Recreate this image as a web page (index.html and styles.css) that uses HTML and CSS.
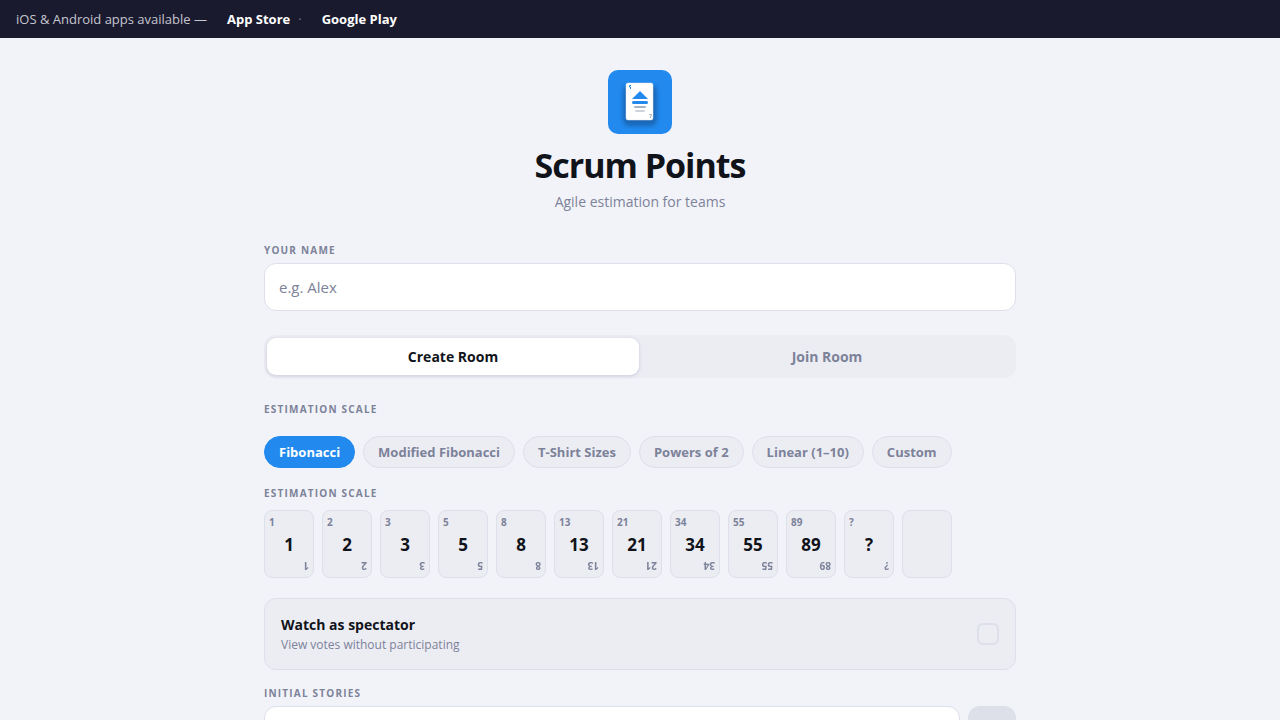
FILE: index.html
```html
<!DOCTYPE html>
<html lang="en">

<head>
    <meta charset="UTF-8">
    <meta name="viewport" content="width=device-width, initial-scale=1.0">
    <title>Scrum Points</title>
    <link rel="stylesheet" href="styles.css">
</head>

<body>
    <div class="app_banner">
        <span class="banner_text">iOS &amp; Android apps available —</span>
        <a href="#appstore">App Store</a>
        <span class="banner_dot">·</span>
        <a href="#googleplay">Google Play</a>
    </div>

    <main class="container">
        <header class="hero">
            <svg class="logo" viewBox="0 0 64 64" width="64" height="64" aria-hidden="true">
                <defs>
                    <filter id="card_shadow" x="-50%" y="-50%" width="200%" height="200%">
                        <feGaussianBlur stdDeviation="2" />
                    </filter>
                </defs>
                <rect width="64" height="64" rx="10" fill="#228aef" />
                <rect x="15" y="15" width="34" height="41" rx="6" fill="#12599f" opacity="0.7" filter="url(#card_shadow)" />
                <rect x="18" y="13" width="27" height="37" rx="2" fill="#fff" stroke="#e3e6ee" stroke-width="0.5" />
                <path d="M32 21 L40 29 H24 Z" fill="#228aef" />
                <rect x="24" y="31" width="16" height="3" rx="1.5" fill="#228aef" />
                <rect x="26" y="36" width="12" height="2" rx="1" fill="#a9b4c6" />
                <rect x="27" y="40" width="10" height="2" rx="1" fill="#cdd3dd" />
                <path d="M23 15.5 H21.5 V17 H22.5 V19" fill="none" stroke="#228aef" />
                <path d="M41 44.5 H43.5 V46 H42.5 V48" fill="none" stroke="#b3b9c7" />
            </svg>
            <h1>Scrum Points</h1>
            <p>Agile estimation for teams</p>
        </header>

        <label class="label" for="name">Your Name</label>
        <input class="text_input" type="text" id="name" placeholder="e.g. Alex">

        <div class="tabs">
            <button class="tab active" type="button">Create Room</button>
            <button class="tab" type="button">Join Room</button>
        </div>

        <h2 class="label">Estimation Scale</h2>
        <div class="scales">
            <button class="scale active" type="button">Fibonacci</button>
            <button class="scale" type="button">Modified Fibonacci</button>
            <button class="scale" type="button">T-Shirt Sizes</button>
            <button class="scale" type="button">Powers of 2</button>
            <button class="scale" type="button">Linear (1–10)</button>
            <button class="scale" type="button">Custom</button>
        </div>

        <h2 class="label">Estimation Scale</h2>
        <div class="cards">
            <div class="card"><small>1</small><b>1</b><small class="flipped">1</small></div>
            <div class="card"><small>2</small><b>2</b><small class="flipped">2</small></div>
            <div class="card"><small>3</small><b>3</b><small class="flipped">3</small></div>
            <div class="card"><small>5</small><b>5</b><small class="flipped">5</small></div>
            <div class="card"><small>8</small><b>8</b><small class="flipped">8</small></div>
            <div class="card"><small>13</small><b>13</b><small class="flipped">13</small></div>
            <div class="card"><small>21</small><b>21</b><small class="flipped">21</small></div>
            <div class="card"><small>34</small><b>34</b><small class="flipped">34</small></div>
            <div class="card"><small>55</small><b>55</b><small class="flipped">55</small></div>
            <div class="card"><small>89</small><b>89</b><small class="flipped">89</small></div>
            <div class="card"><small>?</small><b>?</b><small class="flipped">?</small></div>
            <div class="card"></div>
        </div>

        <label class="spectator" for="spectator">
            <span class="spectator_text">
                <strong>Watch as spectator</strong>
                <span>View votes without participating</span>
            </span>
            <input type="checkbox" id="spectator">
        </label>

        <label class="label" for="story">Initial Stories</label>
        <div class="story_row">
            <input class="text_input" type="text" id="story">
            <button class="add_btn" type="button" aria-label="Add story"></button>
        </div>
    </main>
</body>

</html>
```
FILE: styles.css
```css
* {
    box-sizing: border-box;
}

body {
    margin: 0;
    background-color: #f2f3f8;
    color: #11131a;
    font-family: "Open Sans", "Noto Sans", sans-serif;
}

button,
input {
    font-family: inherit;
}

.app_banner {
    display: flex;
    align-items: center;
    height: 38px;
    padding: 0 16px;
    background-color: #1a1a2e;
    color: #c6c6d0;
    font-size: 13px;
}

.app_banner a {
    margin-left: 20px;
    color: white;
    font-weight: 700;
    text-decoration: none;
}

.banner_dot {
    margin-left: 8px;
    color: #77778a;
}

.container {
    max-width: 800px;
    margin: auto;
    padding: 32px 24px;
}

.hero {
    text-align: center;
    margin-bottom: 32px;
}

.logo {
    display: block;
    margin: auto;
}

h1 {
    margin: 8px 0 0;
    font-size: 34px;
    line-height: 46px;
    font-weight: 700;
    letter-spacing: -1px;
}

.hero p {
    margin: 5px 0 0;
    color: #7c8299;
    font-size: 14px;
    line-height: 18px;
}

.label {
    display: block;
    margin: 0 0 6px;
    color: #7c8299;
    font-size: 10px;
    line-height: 14px;
    font-weight: 700;
    letter-spacing: 0.12em;
    text-transform: uppercase;
}

.text_input {
    display: block;
    width: 100%;
    height: 48px;
    padding: 0 14px;
    border: 1px solid #dddfea;
    border-radius: 12px;
    background-color: white;
    color: #11131a;
    font-size: 15px;
}

.text_input::placeholder {
    color: #7c8299;
}

.tabs {
    display: flex;
    gap: 2px;
    height: 43px;
    margin: 24px 0;
    padding: 3px;
    border-radius: 12px;
    background-color: #ecedf3;
}

.tab {
    flex: 1;
    border: none;
    border-radius: 9px;
    background-color: transparent;
    color: #7c8299;
    font-size: 14px;
    font-weight: 700;
    cursor: pointer;
}

.tab.active {
    background-color: white;
    color: #11131a;
    box-shadow: 0 1px 3px 1px #d5d6e3;
}

.scales {
    display: flex;
    flex-wrap: wrap;
    gap: 8px;
    margin: 20px 0 18px;
}

.scale {
    height: 32px;
    padding: 0 14px;
    border: 1px solid #dddfea;
    border-radius: 16px;
    background-color: #ecedf3;
    color: #7c8299;
    font-size: 13px;
    font-weight: 700;
    cursor: pointer;
}

.scale.active {
    border-color: #228aef;
    background-color: #228aef;
    color: white;
}

.cards {
    display: flex;
    flex-wrap: wrap;
    gap: 8px;
    margin: 10px 0 20px;
}

.card {
    display: flex;
    flex-direction: column;
    justify-content: space-between;
    width: 50px;
    height: 68px;
    padding: 4px;
    border: 1px solid #dddfea;
    border-radius: 8px;
    background-color: #ecedf3;
}

.card small {
    color: #7c8299;
    font-size: 10px;
    line-height: 14px;
    font-weight: 700;
}

.card b {
    margin-top: 2px;
    font-size: 17px;
    line-height: 24px;
    text-align: center;
}

.card .flipped {
    transform: rotate(180deg);
}

.spectator {
    display: flex;
    align-items: center;
    justify-content: space-between;
    min-height: 72px;
    margin-bottom: 16px;
    padding: 0 16px;
    border: 1px solid #dddfea;
    border-radius: 12px;
    background-color: #ecedf3;
    cursor: pointer;
}

.spectator_text {
    display: flex;
    flex-direction: column;
    padding-top: 2px;
    color: #7c8299;
    font-size: 12px;
    line-height: 20px;
}

.spectator_text strong {
    color: #11131a;
    font-size: 14px;
}

.spectator input {
    appearance: none;
    width: 22px;
    height: 22px;
    margin: 0;
    border: 2px solid #dddfea;
    border-radius: 6px;
}

.spectator input:checked {
    border-color: #228aef;
    background-color: #228aef;
}

.story_row {
    display: flex;
    gap: 8px;
}

.add_btn {
    flex: none;
    width: 48px;
    height: 48px;
    border: none;
    border-radius: 12px;
    background-color: #dddfe9;
}
```
